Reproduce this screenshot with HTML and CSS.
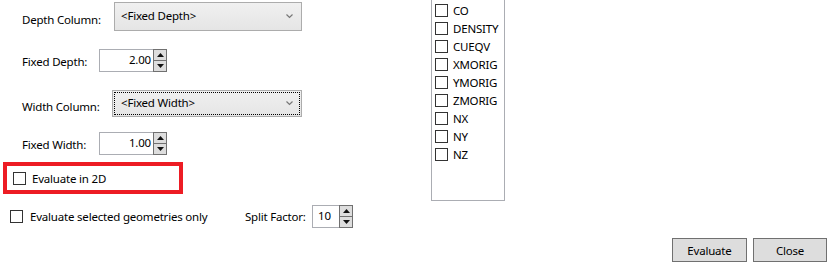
FILE: index.html
```html
<html>
	<head>
		<link rel="stylesheet" href="styles.css">
	</head>
	<body>
		<div class="dialog">
			<div class="top">
				<div class="form">
					<div class="row row-depth">
						<span class="label">Depth Column:</span>
						<div class="combo">
							<span class="combo-text">&lt;Fixed Depth&gt;</span>
							<svg class="chevron" width="7" height="5" viewBox="0 0 7 5"><polyline points="0.5,0.5 3.5,3.5 6.5,0.5" fill="none" stroke="#777" stroke-width="1.2"/></svg>
						</div>
					</div>
					<div class="row row-fdepth">
						<span class="label">Fixed Depth:</span>
						<div class="spin">
							<span class="spin-value">2.00</span>
							<div class="spin-buttons">
								<div class="spin-btn"><svg width="7" height="4" viewBox="0 0 7 4"><polygon points="0,4 3.5,0 7,4" fill="#111"/></svg></div>
								<div class="spin-btn"><svg width="7" height="4" viewBox="0 0 7 4"><polygon points="0,0 3.5,4 7,0" fill="#111"/></svg></div>
							</div>
						</div>
					</div>
					<div class="row row-width">
						<span class="label">Width Column:</span>
						<div class="combo focused">
							<span class="combo-text">&lt;Fixed Width&gt;</span>
							<svg class="chevron" width="7" height="5" viewBox="0 0 7 5"><polyline points="0.5,0.5 3.5,3.5 6.5,0.5" fill="none" stroke="#777" stroke-width="1.2"/></svg>
						</div>
					</div>
					<div class="row row-fwidth">
						<span class="label">Fixed Width:</span>
						<div class="spin">
							<span class="spin-value">1.00</span>
							<div class="spin-buttons">
								<div class="spin-btn"><svg width="7" height="4" viewBox="0 0 7 4"><polygon points="0,4 3.5,0 7,4" fill="#111"/></svg></div>
								<div class="spin-btn"><svg width="7" height="4" viewBox="0 0 7 4"><polygon points="0,0 3.5,4 7,0" fill="#111"/></svg></div>
							</div>
						</div>
					</div>
					<div class="highlight">
						<label class="check"><span class="box"></span>Evaluate in 2D</label>
					</div>
				</div>
				<div class="list">
					<div class="item"><span class="box"></span>CO</div>
					<div class="item"><span class="box"></span>DENSITY</div>
					<div class="item"><span class="box"></span>CUEQV</div>
					<div class="item"><span class="box"></span>XMORIG</div>
					<div class="item"><span class="box"></span>YMORIG</div>
					<div class="item"><span class="box"></span>ZMORIG</div>
					<div class="item"><span class="box"></span>NX</div>
					<div class="item"><span class="box"></span>NY</div>
					<div class="item"><span class="box"></span>NZ</div>
				</div>
			</div>
			<div class="options">
				<label class="check check-geom"><span class="box"></span>Evaluate selected geometries only</label>
				<span class="label label-split">Split Factor:</span>
				<div class="spin spin-split">
					<span class="spin-value">10</span>
					<div class="spin-buttons">
						<div class="spin-btn"><svg width="7" height="4" viewBox="0 0 7 4"><polygon points="0,4 3.5,0 7,4" fill="#111"/></svg></div>
						<div class="spin-btn"><svg width="7" height="4" viewBox="0 0 7 4"><polygon points="0,0 3.5,4 7,0" fill="#111"/></svg></div>
					</div>
				</div>
			</div>
			<div class="actions">
				<button class="btn btn-eval">Evaluate</button>
				<button class="btn btn-close">Close</button>
			</div>
		</div>
	</body>
</html>
```

FILE: styles.css
```css
body {
	margin: 0px;
	background-color: #ffffff;
	font-family: "Noto Sans", sans-serif;
	font-size: 11.5px;
	letter-spacing: -0.2px;
	color: #000000;
}
.dialog {
	width: 840px;
	height: 269px;
	overflow: hidden;
}
.top {
	display: flex;
	height: 201px;
}
.form {
	width: 431px;
}
.row {
	display: flex;
	align-items: center;
	padding-left: 22px;
}
.row .label {
	flex: none;
}
.row-depth {
	margin-top: 2px;
	height: 29px;
}
.row-depth .label {
	width: 92px;
	padding-top: 6px;
}
.row-fdepth {
	margin-top: 18px;
	height: 23px;
}
.row-fdepth .label,
.row-fwidth .label {
	width: 77px;
	padding-top: 1px;
}
.row-width {
	margin-top: 18px;
	height: 27px;
}
.row-width .label {
	width: 90px;
	padding-top: 5px;
}
.row-fwidth {
	margin-top: 15px;
	height: 23px;
}

/* combo boxes */
.combo {
	box-sizing: border-box;
	display: flex;
	align-items: center;
	justify-content: space-between;
	height: 100%;
	width: 188px;
	padding: 0 8px 0 6px;
	border: 1px solid #acacac;
	background: linear-gradient(#f0f0f0, #e5e5e5);
}
.combo-text {
	margin-top: -2px;
}
.combo.focused {
	width: 190px;
	padding-left: 8px;
	outline: 1px dotted #000000;
	outline-offset: -3px;
}
.chevron {
	display: block;
}

/* numeric up/down */
.spin {
	box-sizing: border-box;
	display: flex;
	width: 68px;
	height: 100%;
	border: 1px solid #abadb3;
}
.spin-value {
	flex: 1;
	text-align: right;
	padding-right: 2px;
	line-height: 19px;
}
.spin-buttons {
	display: flex;
	flex-direction: column;
	width: 14px;
	margin: -1px -1px -1px 0;
}
.spin-btn {
	flex: 1;
	display: flex;
	align-items: center;
	justify-content: center;
	background-color: #dddddd;
	border: 1px solid #707070;
}
.spin-btn + .spin-btn {
	border-top: 0;
}

/* checkboxes */
.check {
	display: flex;
	align-items: center;
}
.box {
	box-sizing: border-box;
	flex: none;
	width: 13px;
	height: 13px;
	border: 1px solid #333333;
	background-color: #ffffff;
}
.highlight {
	box-sizing: border-box;
	display: flex;
	align-items: center;
	margin: 7px 0 0 3px;
	width: 180px;
	height: 32px;
	padding-left: 6px;
	border: 4px solid #ed1c24;
}
.highlight .box {
	margin-right: 6px;
}

/* list of columns */
.list {
	box-sizing: border-box;
	width: 74px;
	height: 201px;
	padding: 1px 0 0 3px;
	border: 1px solid #abadb3;
	border-top: 0;
}
.item {
	display: flex;
	align-items: center;
	height: 18px;
}
.item .box {
	margin-right: 5px;
}

/* bottom options */
.options {
	display: flex;
	align-items: center;
	margin-top: 4px;
	height: 23px;
	padding-left: 10px;
}
.check-geom {
	width: 235px;
}
.check-geom .box {
	margin-right: 7px;
}
.label-split {
	width: 67px;
}
.spin-split {
	width: 41px;
}
.spin-split .spin-value {
	text-align: left;
	padding-left: 5px;
}

.actions {
	display: flex;
	justify-content: flex-end;
	gap: 6px;
	margin-top: 10px;
	padding-right: 13px;
}
.btn {
	box-sizing: border-box;
	height: 24px;
	padding: 0;
	font-family: "Noto Sans", sans-serif;
	font-size: 11.5px;
	letter-spacing: -0.2px;
	color: #000000;
	background-color: #dddddd;
	border: 1px solid #707070;
	border-radius: 0;
}
.btn-eval {
	width: 75px;
}
.btn-close {
	width: 74px;
}
```
